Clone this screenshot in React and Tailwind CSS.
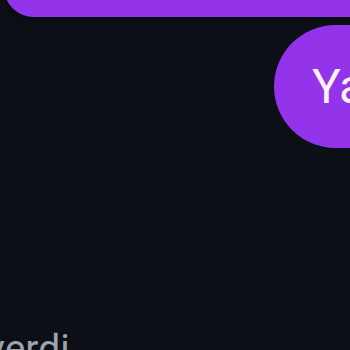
import React from "react";

// Chat thread, cropped view
const App = () => {
  return (
    <div
      className="w-[350px] h-[350px] overflow-hidden bg-[#0c0f16] flex flex-col"
      style={{ fontFamily: "Roboto, 'Noto Sans', sans-serif" }}
    >
      {/* previous message, cut at the top */}
      <div className="h-[59px] mt-[-42px] ml-[4px] mr-[-60px] shrink-0 rounded-[36px] bg-[#9333ea] shadow-[0_2px_6px_rgba(0,0,0,0.45)]" />

      {/* own message */}
      <div className="flex mt-[8px] pl-[274px] shrink-0">
        <div className="h-[123px] w-[200px] shrink-0 flex items-center pl-[38px] rounded-full bg-[#9333ea] text-[48px] leading-none text-[#fdf2fe] whitespace-nowrap">
          Yarın
        </div>
      </div>

      {/* status line */}
      <div className="mt-auto mb-[-19px] ml-[-14px] text-[39px] leading-none text-[#9ca3af] whitespace-nowrap">
        verdi
      </div>
    </div>
  );
};

export default App;
